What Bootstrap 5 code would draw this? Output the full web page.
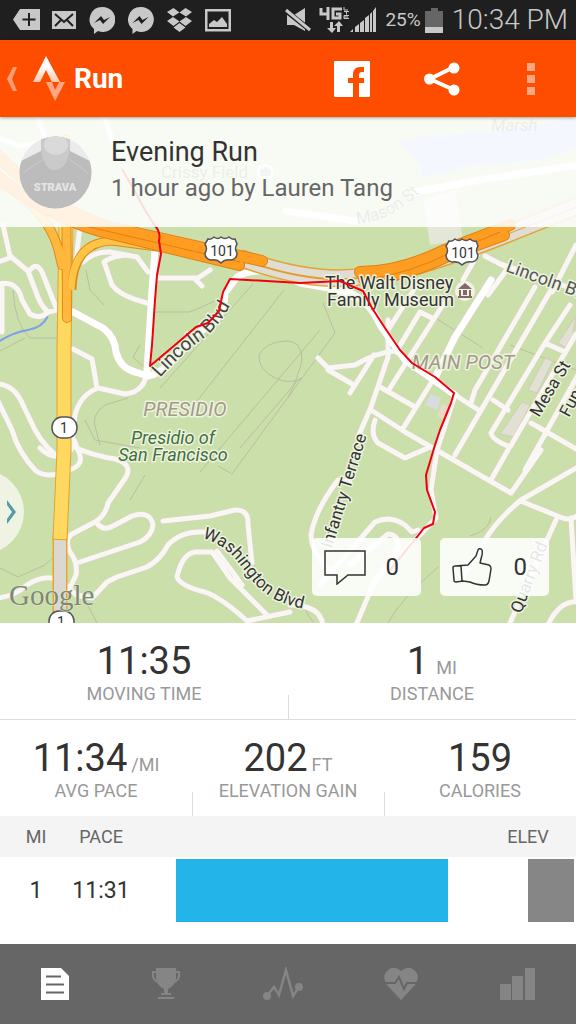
<!DOCTYPE html>
<html lang="en">
<head>
<meta charset="utf-8">
<meta name="viewport" content="width=device-width, initial-scale=1">
<title>Run</title>
<link href="https://cdn.jsdelivr.net/npm/bootstrap@5.3.0/dist/css/bootstrap.min.css" rel="stylesheet">
<style>
body{font-family:Roboto,"Noto Sans",sans-serif;color:#333;background:#fff}
svg{display:block;flex-shrink:0}
button{border:0;background:none;padding:0;color:inherit}
.status{height:40px;background:#1f1f1f;color:#c8c8c8;padding:0 8px 0 13px}
.status-icons{gap:12px}
.status-clock{font-size:28px;font-weight:300;line-height:40px}
.status-pct{font-size:19px;line-height:40px}
.appbar{height:77px;background:#ff4d00;color:#fff;padding:0 28px 0 6px;box-shadow:0 1px 3px rgba(0,0,0,.35);z-index:2}
.appbar-logo{margin:0 9px 0 14px}
.appbar-title{font-size:28px;font-weight:700;line-height:36px}
.appbar-actions{gap:54px}
.map{height:506px;background:#cbdfab}
.summary{height:110px;background:rgba(255,255,255,.87);padding:0 20px 0 19px;gap:19px}
.summary-title{font-size:27px;line-height:36px;font-weight:400}
.summary-by{font-size:24px;line-height:36px;color:#666}
.summary-text{padding-bottom:4px}
.drawer{left:-60px;top:353px;width:84px;height:84px;border-radius:50%;background:rgba(240,244,230,.93);padding-right:7px}
.social{right:27px;bottom:27px;gap:19px}
.social button{width:109px;height:58px;border-radius:5px;background:rgba(255,255,255,.88);font-size:24px;padding:0 22px 0 12px}
.stat{height:96px;padding-top:14px;position:relative}
.stat-row{border-bottom:1px solid #dcdcdc}
.stat + .stat::before{content:"";position:absolute;left:0;bottom:0;height:24px;border-left:1px solid #dcdcdc}
.stat-num{font-size:38px;line-height:48px;height:48px}
.stat-unit{font-size:18px;line-height:18px;color:#999}
.stat-label{font-size:18px;line-height:18px;color:#999}
.splits{table-layout:fixed;width:100%}
.splits th{background:#f4f4f4;height:41px;font-size:18px;font-weight:400;color:#666;padding:0}
.splits td{padding:2px 0;font-size:23px;line-height:63px}
.c-mi{width:72px}.c-pace{width:58px}.c-gap{width:46px}.c-elev{width:96px}
.split-bar{height:63px;background:#23b4ea}
.elev-bar{height:63px;background:#868686;margin-left:48px}
.tabs{height:80px;background:#666;padding:0 41px;color:#858585}
.tabs .active{color:#fff}
.tabs a{color:inherit}
</style>
</head>
<body class="d-flex flex-column min-vh-100">
<div class="status d-flex align-items-center">
  <div class="status-icons d-flex align-items-center">
    <svg width="27" height="24" viewBox="0 0 27 24" fill="#c8c8c8"><path d="M0 11.500 7 1H27V22H7Z"/><path d="M16 5v13M9.500 11.500h13" stroke="#1f1f1f" stroke-width="2"/></svg>
    <svg width="25" height="24" viewBox="0 0 25 24"><path fill="#c8c8c8" d="M0 3h24v18H0z"/><path d="m3 6 9 8 9-8M3 18l6-6m6 0 6 6" stroke="#1f1f1f" stroke-width="2" fill="none"/></svg>
    <svg width="26" height="28" viewBox="0 0 26 28"><path fill="#c8c8c8" d="M13 1a12.500 12.500 0 1 1-4 24l-4 3V23A12.500 12.500 0 0 1 13 1Z"/><path d="m5 17 7-7 3 4 6-3-7 7-3-4z" fill="#1f1f1f"/></svg>
    <svg width="27" height="28" viewBox="0 0 26 28"><path fill="#c8c8c8" d="M13 1a12.500 12.500 0 1 1-4 24l-4 3V23A12.500 12.500 0 0 1 13 1Z"/><path d="m5 17 7-7 3 4 6-3-7 7-3-4z" fill="#1f1f1f"/></svg>
    <svg width="27" height="25" viewBox="0 0 27 25" fill="#c8c8c8"><path d="m7.500 0 6 4.500-6.500 4L1 4zM19.500 0l-6 4.500 6.500 4L26 4zM7 9l6.500 4.500-6 4.500L1 13zM20 9l-6.500 4.500 6 4.500 6.500-5zM13.500 15l6 4.500-6 4.500-6-4.500z"/></svg>
    <svg width="26" height="24" viewBox="0 0 26 24"><path d="M1.250 2.250h23.500v20H1.250z" fill="none" stroke="#c8c8c8" stroke-width="2.500"/><path fill="#c8c8c8" d="M4 19v-3l5-4 3 2 5-5 5 7v3z"/></svg>
  </div>
  <div class="d-flex align-items-center ms-auto">
    <svg class="me-2" width="26" height="26" viewBox="0 0 26 26"><path fill="#c8c8c8" d="M2 8h7L20 1v23L9 18H2z"/><path d="m0 3 25 20" stroke="#1f1f1f" stroke-width="5"/><path d="m1 3 24 20" stroke="#c8c8c8" stroke-width="3"/></svg>
    <svg width="31" height="28" viewBox="0 0 31 28" fill="#c8c8c8"><path fill="none" stroke="#c8c8c8" stroke-width="3" d="M2 2v6h8M9 1v13M23 3H14v9h7V8h-4"/><path fill="none" stroke="#c8c8c8" stroke-width="1" d="M25 1v3h4M25 5.500h5M27.500 5.500v3M30 9.500h-5v3h5M25 11h4"/><path d="M11 16h3v6h3l-4 5-5-5h3zM18 26h3v-6h3l-4-5-5 5h3z"/></svg>
    <svg width="27" height="26" viewBox="0 0 27 26" fill="#c8c8c8"><path d="M0 25l3-3v3zM5 20l4-3v8H5zM10 16l4-3v12h-4zM15 11l4-3v17h-4zM20 7l2-2v20h-2zM23 4l3-4v25h-3z"/></svg>
    <span class="status-pct ms-2">25%</span>
    <svg class="ms-1 me-2" width="19" height="27" viewBox="0 0 19 27"><path fill="#666" d="M6 1h7v3h5v22H0V4h6z"/><path fill="#c8c8c8" d="M0 20h18v6H0z"/></svg>
    <span class="status-clock">10:34 PM</span>
  </div>
</div>

<header class="appbar d-flex align-items-center position-relative">
  <button type="button" aria-label="Back"><svg width="13" height="24" viewBox="0 0 13 24"><path d="M7 0h4L6 12l5 12H7L1 12z" fill="#ff9f78"/></svg></button>
  <svg class="appbar-logo" width="32" height="46" viewBox="0 0 32 46">
    <defs><linearGradient id="lg" x2="0" y2="1"><stop offset=".4" stop-color="#fff"/><stop offset="1" stop-color="#ffc7ae"/></linearGradient></defs>
    <path d="M13 0 27 26H19L13 14 7 26H0z" fill="url(#lg)"/><path d="M13 26h6l3 8 4-8h6L22 45z" fill="#ffa683"/></svg>
  <h1 class="appbar-title m-0">Run</h1>
  <div class="appbar-actions d-flex align-items-center ms-auto">
    <button type="button" aria-label="Share on Facebook"><svg width="36" height="36" viewBox="0 0 36 36"><path fill="#fff" d="M1 0h34q1 0 1 1v34q0 1-1 1h-10V22h5v-5h-5v-3q0-3 3-3h2V6h-4q-7 0-7 8v3h-5v5h5v14H1q-1 0-1-1V1q0-1 1-1z"/></svg></button>
    <button type="button" aria-label="Share"><svg width="36" height="36" viewBox="0 0 36 36" fill="#fff"><path d="M30 6 6 18l24 11" fill="none" stroke="#fff" stroke-width="4"/><circle cx="30" cy="7" r="5.500"/><circle cx="5.500" cy="18" r="5.500"/><circle cx="30" cy="29" r="5.500"/></svg></button>
    <button type="button" aria-label="More options"><svg width="34" height="34" viewBox="0 0 34 34" fill="#ffa683"><path d="M13 1h8v8h-8zM13 13h8v8h-8zM13 25h8v8h-8z"/></svg></button>
  </div>
</header>

<main class="flex-grow-1">
<section class="map position-relative overflow-hidden">
  <svg class="position-absolute top-0 start-0 w-100 h-100" viewBox="0 117 576 506" preserveAspectRatio="xMidYMid slice" font-family="Roboto, sans-serif">
    <defs>
      <path id="roads" d="M3 225 10 256 28 271 36 292Q40 305 48 312L57 310M-2 262 12 257M30 270Q38 260 44 277L57 310M-2 284Q18 280 22 300L30 314Q40 320 48 312M2 284V332
      M38 118 46 142 20 146-2 138M105 118 112 140M147 369Q146 392 125 394L98 388Q80 395 75 415L71 450M73 349 92 359 97 388
      M-2 384Q15 385 23 405L35 430Q45 448 62 460M-2 401 12 430Q18 452 36 471Q45 477 58 474M40 448Q50 458 60 456M68 470Q86 466 78 450L74 440M76 448Q95 456 115 459Q133 464 126 477L108 503Q106 515 95 522L72 534Q64 540 70 552Q78 562 76 575L68 592
      M96 522Q103 532 113 526L132 516Q150 510 153 525Q152 536 140 542L80 562M-2 598Q15 596 27 585Q45 573 62 581L76 595 92 598Q98 592 107 582L117 577 147 567Q160 560 168 545Q180 532 200 532H212
      M163 521 210 516 235 510Q249 509 248 525L252 563M217 551 242 585M290 612 247 621Q222 598 205 592Q180 586 177 577Q182 554 195 552H212Q222 566 230 578L268 616
      M80 226 76 262M83 262Q95 251 110 252L137 257 148 272M127 255Q112 256 104 262L112 285Q120 296 147 303M157 278H198L210 270M195 279 202 286
      M318 358 328 368 355 365Q375 353 395 351M328 370 354 385M374 355 350 393M388 320V357L371 407 358 437M350 482 338 480Q315 510 311 535Q312 555 330 570
      M388 330 420 280M396 352 420 312 432 318M446 300 390 388M480 250 463 280M436 375 402 430M535 287 475 390 471 403M551 290 455 455M380 387 415 407M371 410 405 432 438 451 511 493 541 450M375 420Q370 435 378 443L405 458 428 448
      M455 395 480 411M493 400 508 410M570 305 545 343 491 433Q492 440 510 447L576 334M545 343 565 352M531 423 578 450M578 375 525 470M491 480 508 450M578 467 521 500Q497 520 485 540L462 580M523 502 560 517Q570 522 578 515M556 520 510 623M571 518 576 600M548 625Q560 600 578 602
      M455 395 437 450 431 490 436 518 418 537 375 580 356 625M418 530 412 532 405 525Q390 515 375 522L320 585M370 590 398 548Q400 535 388 534L350 565M290 605Q320 605 323 625M485 256 508 268 488 295M501 264 576 290M576 245 552 292M300 278 358 300"/>
      <path id="major" d="M73 312 103 328Q115 337 116 352Q120 368 135 372L148 376Q165 374 195 335L215 322Q225 308 225 293L237 277Q262 262 300 283L340 290Q368 296 380 325L405 360 455 395M155 250 152 290 147 372M491 280 455 337 436 376M286 211 355 221M415 192 480 180 578 165"/>
      <path id="lincoln" d="M160 378Q185 350 207 336 223 321 233 300"/>
      <path id="wash" d="M202 538Q226 545 240 565L255 584Q272 602 300 608"/>
      <path id="mason" d="M357 224Q390 222 422 191"/>
      <path id="shield" d="M209 239q3 1 6-2 4 3 7 0 4 3 8 0 3 3 6 2l2 5q-3 5 0 9 0 6-6 7-6-1-10 3-4-4-10-3-6-1-6-7 3-4 0-9z"/>
    </defs>
    <path d="M398 141 415 137 500 131 578 117V148L540 160 470 166 420 178 423 165Z" fill="#a9c9f5"/>
    <path d="M423 200 455 190 463 240 430 245Z" fill="#e4e6d7"/>
    <path fill="none" stroke="#b4b79d" stroke-width="1" opacity=".8" d="M13 290Q15 325 30 338H58M-2 352 25 338M86 270 90 290 104 305M140 345 133 357 145 368M155 312H190L222 298M253 284 160 388M284 290 190 410M320 330 200 472M323 303 335 333 286 400 232 474 218 466M302 378Q290 385 275 378 258 370 259 355 266 342 285 341 302 340 302 360 300 372 288 398M300 378 240 448M128 398 105 405Q90 415 96 430L100 445M85 420 95 440 140 448M0 568 18 577 45 565 55 556M130 500 145 475M85 600 97 623M437 319 483 348M388 623Q400 600 438 567M470 536Q490 530 491 517M310 607Q300 605 313 622M576 370 510 345"/>
    <g fill="#e1e0d2" stroke="#cfccba"><path d="M545 358 553 361 537 393 528 390Z M522 402 530 405 514 437 500 434Z M576 316 570 350 558 343Z"/></g>
    <path d="M431 394 441 398 437 410 425 405Z" fill="#d8dce0"/><path d="M442 404 450 407 445 420 437 416Z" fill="#ecd9c5"/>
    <path d="M-2 342Q14 332 28 330T48 316" fill="none" stroke="#7f9fe8" stroke-width="2"/>
    <g fill="none" stroke-linejoin="round" stroke-linecap="round">
      <use href="#roads" stroke="#d9d2c6" stroke-width="6"/><use href="#major" stroke="#d9d2c6" stroke-width="8"/>
      <use href="#roads" stroke="#f9f6f4" stroke-width="5"/><use href="#major" stroke="#fff" stroke-width="7"/>
    </g>
    <g fill="none">
      <path d="M60 535V623" stroke="#e9a52a" stroke-width="15"/><path d="M60 535V623" stroke="#dcd8d0" stroke-width="12"/>
      <path d="M66 225 64 350 64 450 60 540" stroke="#e3a230" stroke-width="15"/><path d="M66 225 64 350 64 450 60 539" stroke="#ffd95f" stroke-width="13"/>
      <path d="M-5 180Q45 205 58 248L62 265M66 140 67 318" stroke="#e08a17" stroke-width="10" stroke-linecap="round"/>
      <path d="M-5 180Q45 205 58 248L62 265M66 140 67 318" stroke="#ffb83d" stroke-width="8" stroke-linecap="round"/>
      <path d="M72 290Q73 242 112 241L165 248" stroke="#e08a17" stroke-width="9"/><path d="M71 290Q73 242 112 241L165 248" stroke="#ffc345" stroke-width="7"/>
      <path d="M240 258Q315 285 365 276 400 276 500 237L580 205" stroke="#e5a239" stroke-width="18"/>
      <path d="M240 258Q315 285 365 276 400 276 500 237L580 205" stroke="#e0ded4" stroke-width="15"/>
      <path d="M240 259Q315 286 365 277" stroke="#e59b2c" stroke-width="2"/><path d="M500 237 580 206" stroke="#e5a239" stroke-width="1"/>
      <g stroke-linecap="round"><path d="M-8 150Q45 205 105 226L262 261M-8 172Q55 222 112 234L239 265M360 272Q400 272 445 250L510 225M364 279Q405 277 450 255L504 235" stroke="#de8312" stroke-width="12"/>
      <path d="M-8 150Q45 205 105 226L262 261M-8 172Q55 222 112 234L239 265M360 272Q400 272 445 250L510 225M364 279Q405 277 450 255L504 235" stroke="#ff9d22" stroke-width="10"/></g>
      <path d="M85 226 240 262M370 279Q410 273 450 253L500 232" stroke="#dc8211"/>
    </g>
    <g fill="#fff" stroke="#555" stroke-width="1.500">
      <use href="#shield" x="-1"/>
      <use href="#shield" x="240" y="2"/>
      <rect x="52" y="417" width="25" height="21" rx="10"/><rect x="49" y="611" width="25" height="21" rx="10"/>
    </g>
    <g font-size="14" text-anchor="middle" fill="#333"><text x="222" y="256">101</text><text x="463" y="258">101</text><text x="64" y="433">1</text><text x="61" y="627">1</text></g>
    <circle cx="465" cy="291" r="10" fill="#f5f1e9"/><path d="M458 289 465 283 472 289ZM459 290h2v7h-2zM469 290h2v7h-2zM458 296h14v2h-14zM463 290h4v5h-4z" fill="#806a64"/>
    <g fill="#333" stroke="#edf3df" stroke-width="3" paint-order="stroke" stroke-linejoin="round" font-size="17">
      <g font-size="18"><text x="325" y="289">The Walt Disney</text><text x="327" y="306">Family Museum</text></g>
      <text font-size="19" fill="#444"><textPath href="#lincoln">Lincoln Blvd</textPath></text>
      <text><textPath href="#wash">Washington Blvd</textPath></text>
      <text font-size="18" transform="translate(505 271) rotate(20)" fill="#555">Lincoln Blvd</text>
      <text transform="translate(539 418) rotate(-59)">Mesa St</text>
      <text transform="translate(569 418) rotate(-62)">Funston Ave</text>
      <text transform="translate(332 549) rotate(-73)">Infantry Terrace</text>
      <text transform="translate(521 614) rotate(-69)">Quarry Rd</text>
      <g font-style="italic" font-size="20" fill="#a39a88" text-anchor="middle"><text x="185" y="416">PRESIDIO</text><text x="463" y="369">MAIN POST</text></g>
      <g font-style="italic" font-size="18" fill="#416f3d" text-anchor="middle"><text x="173" y="444">Presidio of</text><text x="173" y="461">San Francisco</text></g>
      <g stroke="none" fill="#555" opacity=".8"><text x="161" y="178">Crissy Field</text><text font-style="italic" x="491" y="131">Marsh</text><text><textPath href="#mason">Mason St</textPath></text></g>
    </g>
    <circle cx="265" cy="172" r="8" fill="#fff"/><path d="M260 169h3l1-2h4l1 2h2v7h-11z" fill="#aaa"/>
    <text x="9" y="605" font-family="Liberation Serif, serif" font-size="29" fill="#7f8873" stroke="#e3ecd3" stroke-width="1" paint-order="stroke">Google</text>
    <path d="M122 169 133 188 145 210 155 226Q161 232 159 241L161 254 157 275 155 300 152 345 150 366 175 345 196 327 208 323 219 311 223 292 230 279 300 283 340 281 363 291 372 308 385 328 400 350 412 363 435 377 454 393 451 403 440 430 435 445 426 475 427 490 435 512 433 524 424 528 417 537 390 570" fill="none" stroke="#f0000c" stroke-width="2" stroke-linejoin="round"/>
  </svg>

  <div class="summary position-relative d-flex align-items-center">
    <svg width="73" height="73" viewBox="0 0 73 73">
      <defs><clipPath id="av"><circle cx="36.500" cy="36.500" r="36"/></clipPath></defs>
      <g clip-path="url(#av)"><path fill="#ebebeb" d="M0 0h73v73H0z"/><path d="M0 26 22 15V0h29v15l22 11v47H0z" fill="#bcbcbc"/><path d="M22 14Q25 34 36 34T51 14V0H22z" fill="#cacaca"/><ellipse cx="37" cy="9" rx="12" ry="10" fill="#dadada"/><path d="M4 37 24 23M69 37 50 23" stroke="#cacaca"/></g>
      <text x="36" y="55" font-size="11" font-weight="900" text-anchor="middle" fill="#e4e4e4" font-family="Roboto, sans-serif">STRAVA</text>
    </svg>
    <div class="summary-text">
      <h2 class="summary-title m-0">Evening Run</h2>
      <div class="summary-by">1 hour ago by Lauren Tang</div>
    </div>
  </div>

  <button type="button" class="drawer position-absolute d-flex align-items-center justify-content-end" aria-label="Open drawer"><svg width="11" height="26" viewBox="0 0 11 26"><path d="M1 1v5l5 7-5 7v5l9-12z" fill="#559ba5"/></svg></button>
  <div class="social position-absolute d-flex">
    <button type="button" class="d-flex align-items-center justify-content-between" aria-label="Comments"><svg width="43" height="36" viewBox="0 0 43 36"><path d="M1 2h40v24H24L13 35V26H1z" fill="none" stroke="#333" stroke-width="1.500"/></svg>0</button>
    <button type="button" class="d-flex align-items-center justify-content-between" aria-label="Kudos"><svg width="40" height="40" viewBox="0 0 40 40"><path d="M1 21q0-2 2-2l13-1 8-9 2-6q1-2 3-1 2 1 1 6l-2 8 9 2q2 1 2 4l-2 12q-1 4-4 4-9 0-15-3l-7-1-7 1q-2 0-2-2zM9 19l1 15" fill="none" stroke="#333" stroke-width="1.500" stroke-linejoin="round"/></svg>0</button>
  </div>
</section>

<section class="text-center">
  <div class="row g-0 stat-row">
    <div class="col stat"><div class="stat-num">11:35</div><div class="stat-label">MOVING TIME</div></div>
    <div class="col stat"><div class="stat-num">1<span class="stat-unit ms-2">MI</span></div><div class="stat-label">DISTANCE</div></div>
  </div>
  <div class="row g-0">
    <div class="col stat"><div class="stat-num">11:34<span class="stat-unit ms-1">/MI</span></div><div class="stat-label">AVG PACE</div></div>
    <div class="col stat"><div class="stat-num">202<span class="stat-unit ms-1">FT</span></div><div class="stat-label">ELEVATION GAIN</div></div>
    <div class="col stat"><div class="stat-num">159</div><div class="stat-label">CALORIES</div></div>
  </div>
</section>

<table class="splits text-center">
  <colgroup><col class="c-mi"><col class="c-pace"><col class="c-gap"><col><col class="c-elev"></colgroup>
  <thead><tr><th scope="col">MI</th><th scope="col">PACE</th><th colspan="2"></th><th scope="col">ELEV</th></tr></thead>
  <tbody><tr><td>1</td><td>11:31</td><td></td><td><div class="split-bar" style="width:89.500%"></div></td><td><div class="elev-bar" style="width:48%"></div></td></tr></tbody>
</table>
</main>

<nav class="tabs d-flex align-items-center justify-content-between" aria-label="Activity sections">
  <a href="#details" class="active" aria-label="Details"><svg width="28" height="34" viewBox="0 0 28 34"><path fill="currentColor" d="M0 1h20l8 8v24H0z"/><path d="M5 9.500h15M5 17.500h18M5 25.500h18" stroke="#666" stroke-width="2"/></svg></a>
  <a href="#achievements" aria-label="Achievements"><svg width="30" height="34" viewBox="0 0 30 34"><path fill="currentColor" d="M5 1h20v10q0 7-8 11v4h3v2H10v-2h3v-4Q5 18 5 11zM7 30h16v2H7z"/><path d="M6 5H2Q1 15 9 15M24 5h4q1 10-7 10" fill="none" stroke="currentColor" stroke-width="2"/></svg></a>
  <a href="#analysis" aria-label="Analysis"><svg width="40" height="34" viewBox="0 0 40 34"><path d="m4 29 7-9 5 8L23 3l7 26 6-9" fill="none" stroke="currentColor" stroke-width="2.500"/><circle cx="4" cy="29" r="4" fill="currentColor"/><circle cx="36" cy="20" r="4" fill="currentColor"/></svg></a>
  <a href="#heartrate" aria-label="Heart rate"><svg width="34" height="34" viewBox="0 0 34 34"><path fill="currentColor" d="M17 33 3 18Q-2 11 2 5 9-3 17 4q8-7 15 1 4 6-1 13z"/><path d="M0 16h11l4-6 5 12 3-6h11" fill="none" stroke="#666" stroke-width="2"/></svg></a>
  <a href="#zones" aria-label="Zones"><svg width="35" height="34" viewBox="0 0 35 34" fill="currentColor"><path d="M0 17h11v16H0zM12 9h11v24H12zM25 1h10v32H25z"/></svg></a>
</nav>
<script src="https://cdn.jsdelivr.net/npm/bootstrap@5.3.0/dist/js/bootstrap.bundle.min.js"></script>
</body>
</html>
